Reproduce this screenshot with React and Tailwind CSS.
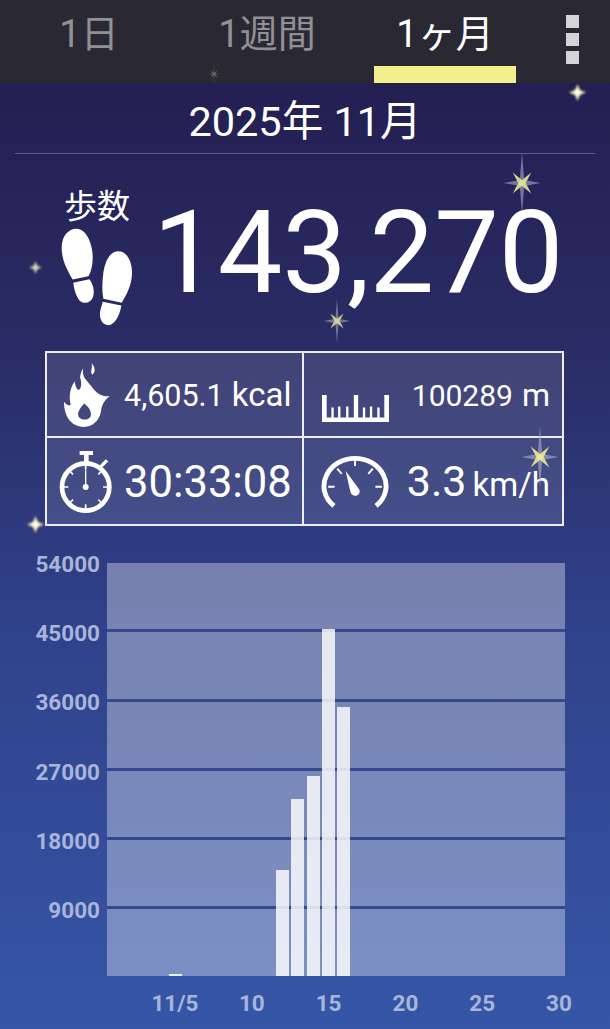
const FONT = "font-['Roboto','Noto_Sans_CJK_JP',sans-serif]";

// Sparkle drawn as a long four-point star with a shorter diagonal cross in the middle.
function Star({ x, y, size, opacity = 1 }) {
  return (
    <svg
      className="absolute pointer-events-none blur-[0.7px]"
      style={{ left: x - size / 2, top: y - size / 2, opacity }}
      width={size}
      height={size}
      viewBox="-50 -50 100 100"
    >
      <path d="M0-50 L3.5-5 L30 0 L3.5 5 L0 50 L-3.5 5 L-30 0 L-3.5-5Z" fill="#a9a8c8" opacity="0.65" />
      <path d="M-15-17 L0-5 L15-17 L6 0 L15 17 L0 5 L-15 17 L-6 0Z" fill="#dcdc90" />
      <circle r="5" fill="#e6e6a8" />
    </svg>
  );
}

// Small sparkle: a soft glowing dot with short points.
function Glint({ x, y, size, opacity = 1 }) {
  return (
    <svg
      className="absolute pointer-events-none blur-[0.9px]"
      style={{ left: x - size / 2, top: y - size / 2, opacity }}
      width={size}
      height={size}
      viewBox="-50 -50 100 100"
    >
      <path d="M0-50 L14-14 L50 0 L14 14 L0 50 L-14 14 L-50 0 L-14-14Z" fill="#eeeaa6" />
      <circle r="20" fill="#fffde0" />
    </svg>
  );
}

function Footprints() {
  return (
    <svg width="75" height="102" viewBox="120 170 225 305" fill="#fff">
      <path d="M170 178C200 178 218 225 218 265C218 290 212 310 205 320L158 330C140 300 125 270 125 235C125 200 145 178 170 178Z" />
      <path d="M160 340L208 329C220 345 225 365 218 385C210 402 190 405 178 392C168 380 162 360 160 340Z" />
      <path d="M295 245C320 245 336 275 336 310C336 345 320 375 305 400L250 388C245 360 247 335 250 310C255 275 270 245 295 245Z" />
      <path d="M248 397L304 408C300 435 285 467 265 467C245 467 238 445 240 430C242 418 245 408 248 397Z" />
    </svg>
  );
}

function Flame() {
  return (
    <svg width="46" height="64" viewBox="28 15 137 190">
      <path
        fill="#fff"
        fillRule="evenodd"
        d="M85 30C80 60 98 65 110 85C122 100 135 118 165 113C148 125 140 140 138 160C132 190 110 205 88 205C55 205 28 180 28 130C36 140 42 142 48 140C42 115 45 90 60 70C62 85 66 95 72 95C82 90 80 70 76 58C76 48 80 38 85 30ZM88 135C100 145 110 155 108 170C105 188 72 188 70 168C70 155 80 145 88 135Z"
      />
      <path d="M110 15C122 28 122 42 112 50C105 40 114 30 110 15Z" fill="#fff" />
    </svg>
  );
}

function Stopwatch() {
  return (
    <svg width="55" height="64" viewBox="85 315 165 190" fill="none" stroke="#fff">
      <circle cx="168" cy="428" r="71" strokeWidth="14" />
      <path d="M150 326H190" strokeWidth="12" />
      <path d="M170 326V356" strokeWidth="14" />
      <path d="M214 366L232 348" strokeWidth="10" />
      <path d="M168 428V378" strokeWidth="4" />
      <circle cx="168" cy="428" r="9" fill="#fff" stroke="none" />
      <path d="M168 362V376M168 480V494M102 428H116M220 428H234M120 380L130 390M216 380L206 390M120 476L130 466M216 476L206 466" strokeWidth="5" />
    </svg>
  );
}

function Ruler() {
  return (
    <svg width="67" height="27" viewBox="22 28 200 80" fill="#fff">
      <path d="M22 28H36V95H208V28H222V108H22Z" />
      <path d="M50 65h7v32h-7zM70 62h7v35h-7zM94 62h7v35h-7zM117 28h13v69h-13zM144 65h7v32h-7zM165 62h7v35h-7zM187 65h7v32h-7z" />
    </svg>
  );
}

function Gauge() {
  return (
    <svg width="68" height="56" viewBox="62 325 210 170" fill="none" stroke="#fff">
      <path d="M102 487C72 462 62 425 80 390C96 358 130 340 167 340C204 340 238 358 254 390C272 425 262 462 232 487" strokeWidth="15" />
      <path d="M167 342V364M112 372L126 388M84 428H104M222 372L208 388M230 428H250" strokeWidth="6" />
      <path d="M138 378L180 436C186 450 170 462 158 452C154 448 153 444 152 440Z" fill="#fff" stroke="none" />
    </svg>
  );
}

const yTicks = ["54000", "45000", "36000", "27000", "18000", "9000"];
const steps = { 4: 2, 11: 106, 12: 177, 13: 200, 14: 347, 15: 269 };
const days = Array.from({ length: 30 }, (_, i) => i);
const xLabels = ["11/5", "10", "15", "20", "25", "30"];

export default function App() {
  return (
    <div className={`${FONT} relative w-[610px] h-[1029px] overflow-hidden flex flex-col bg-[linear-gradient(180deg,#231f52_8%,#2a2d66_35%,#30418a_60%,#3556a7_100%)]`}>
      {/* Period tabs */}
      <header className="h-[83px] bg-[#2a2833] flex shrink-0">
        <div className="grid grid-cols-[178px_178px_178px] w-[534px] pt-[12px] text-[38px] leading-[45px]">
          <div className="flex justify-center text-[#909095]">1日</div>
          <div className="flex justify-center text-[#909095]">1週間</div>
          <div className="flex flex-col items-center text-white">
            <span>1ヶ月</span>
            <span className="mt-auto w-[142px] h-[17px] bg-[#f4ef8d]" />
          </div>
        </div>
        <div className="flex-1 flex flex-col items-center pt-[15px] gap-[5px]">
          <span className="w-[13px] h-[13px] bg-[#d4d4d8]" />
          <span className="w-[13px] h-[13px] bg-[#d4d4d8]" />
          <span className="w-[13px] h-[13px] bg-[#d4d4d8]" />
        </div>
      </header>

      {/* Month heading */}
      <div className="mx-[15px] h-[71px] border-b border-[#5f5f8c] flex items-center justify-center text-[41.5px] text-white pt-[9px]">
        2025年 11月
      </div>

      {/* Step total */}
      <section className="h-[197px] flex items-start text-white">
        <div className="w-[153px] pl-[60px] pt-[31px] flex flex-col items-start">
          <span className="ml-[4px] text-[33px] leading-[44px]">歩数</span>
          <span className="mt-[-3px]"><Footprints /></span>
        </div>
        <div className="text-[115px] leading-[134px] pt-[32px]">143,270</div>
      </section>

      {/* Activity summary table */}
      <section className="ml-[45px] w-[519px] h-[175px] border-2 border-white/90 bg-white/[0.11] grid grid-cols-[257px_1fr] grid-rows-[85px_1fr] text-white">
        <div className="border-r-2 border-b-2 border-white/90 flex items-center pl-[17px]">
          <Flame />
          <span className="ml-[14px] flex items-baseline gap-[8px] whitespace-nowrap mt-[1px]">
            <span className="text-[30.5px]">4,605.1</span>
            <span className="text-[33px]">kcal</span>
          </span>
        </div>
        <div className="border-b-2 border-white/90 flex items-center pl-[18px]">
          <span className="mt-[27px]"><Ruler /></span>
          <span className="ml-auto pr-[12px] whitespace-nowrap flex items-baseline gap-[9px]">
            <span className="text-[30px]">100289</span>
            <span className="text-[32px]">m</span>
          </span>
        </div>
        <div className="border-r-2 border-white/90 flex items-center pl-[11px]">
          <Stopwatch />
          <span className="ml-[11px] mt-[3px] text-[43.5px] whitespace-nowrap">30:33:08</span>
        </div>
        <div className="flex items-center pl-[17px]">
          <Gauge />
          <span className="ml-auto mt-[1px] pr-[12px] whitespace-nowrap flex items-baseline gap-[6px]">
            <span className="text-[43px]">3.3</span>
            <span className="text-[33px]">km/h</span>
          </span>
        </div>
      </section>

      {/* Monthly step chart */}
      <section className="mt-[37px] flex font-bold text-[22.5px] leading-none text-[#a8b5d9]">
        <div className="w-[107px] pr-[7px] h-[413px] flex flex-col items-end">
          {yTicks.map((t) => (
            <span key={t} className="h-[22px] mb-[47.3px] first:-mt-[10px] flex items-center">
              {t}
            </span>
          ))}
        </div>
        <div className="w-[458px]">
          <div className="h-[413px] grid bg-white/35">
            <div className="col-start-1 row-start-1 grid grid-rows-[repeat(5,69.3px)_1fr]">
              {yTicks.map((t) => (
                <div key={t} className="border-b-[3px] border-[#34478f] last:border-b-0" />
              ))}
            </div>
            <div className="col-start-1 row-start-1 grid grid-cols-[repeat(30,1fr)] items-end">
              {days.map((d) => (
                <div key={d} className="flex justify-center">
                  {steps[d] && <div className="w-[13px] bg-white/[0.82]" style={{ height: steps[d] }} />}
                </div>
              ))}
            </div>
          </div>
          <div className="grid grid-cols-[repeat(6,76.8px)] ml-[29.6px] mt-[16px]">
            {xLabels.map((l) => (
              <div key={l} className="text-center">{l}</div>
            ))}
          </div>
        </div>
      </section>

      <Star x={214} y={74} size={22} opacity={0.35} />
      <Glint x={577} y={92} size={17} />
      <Star x={522} y={183} size={62} opacity={0.95} />
      <Glint x={35} y={267} size={13} opacity={0.8} />
      <Star x={337} y={321} size={44} opacity={0.9} />
      <Star x={540} y={457} size={62} />
      <Glint x={35} y={524} size={17} />
    </div>
  );
}
